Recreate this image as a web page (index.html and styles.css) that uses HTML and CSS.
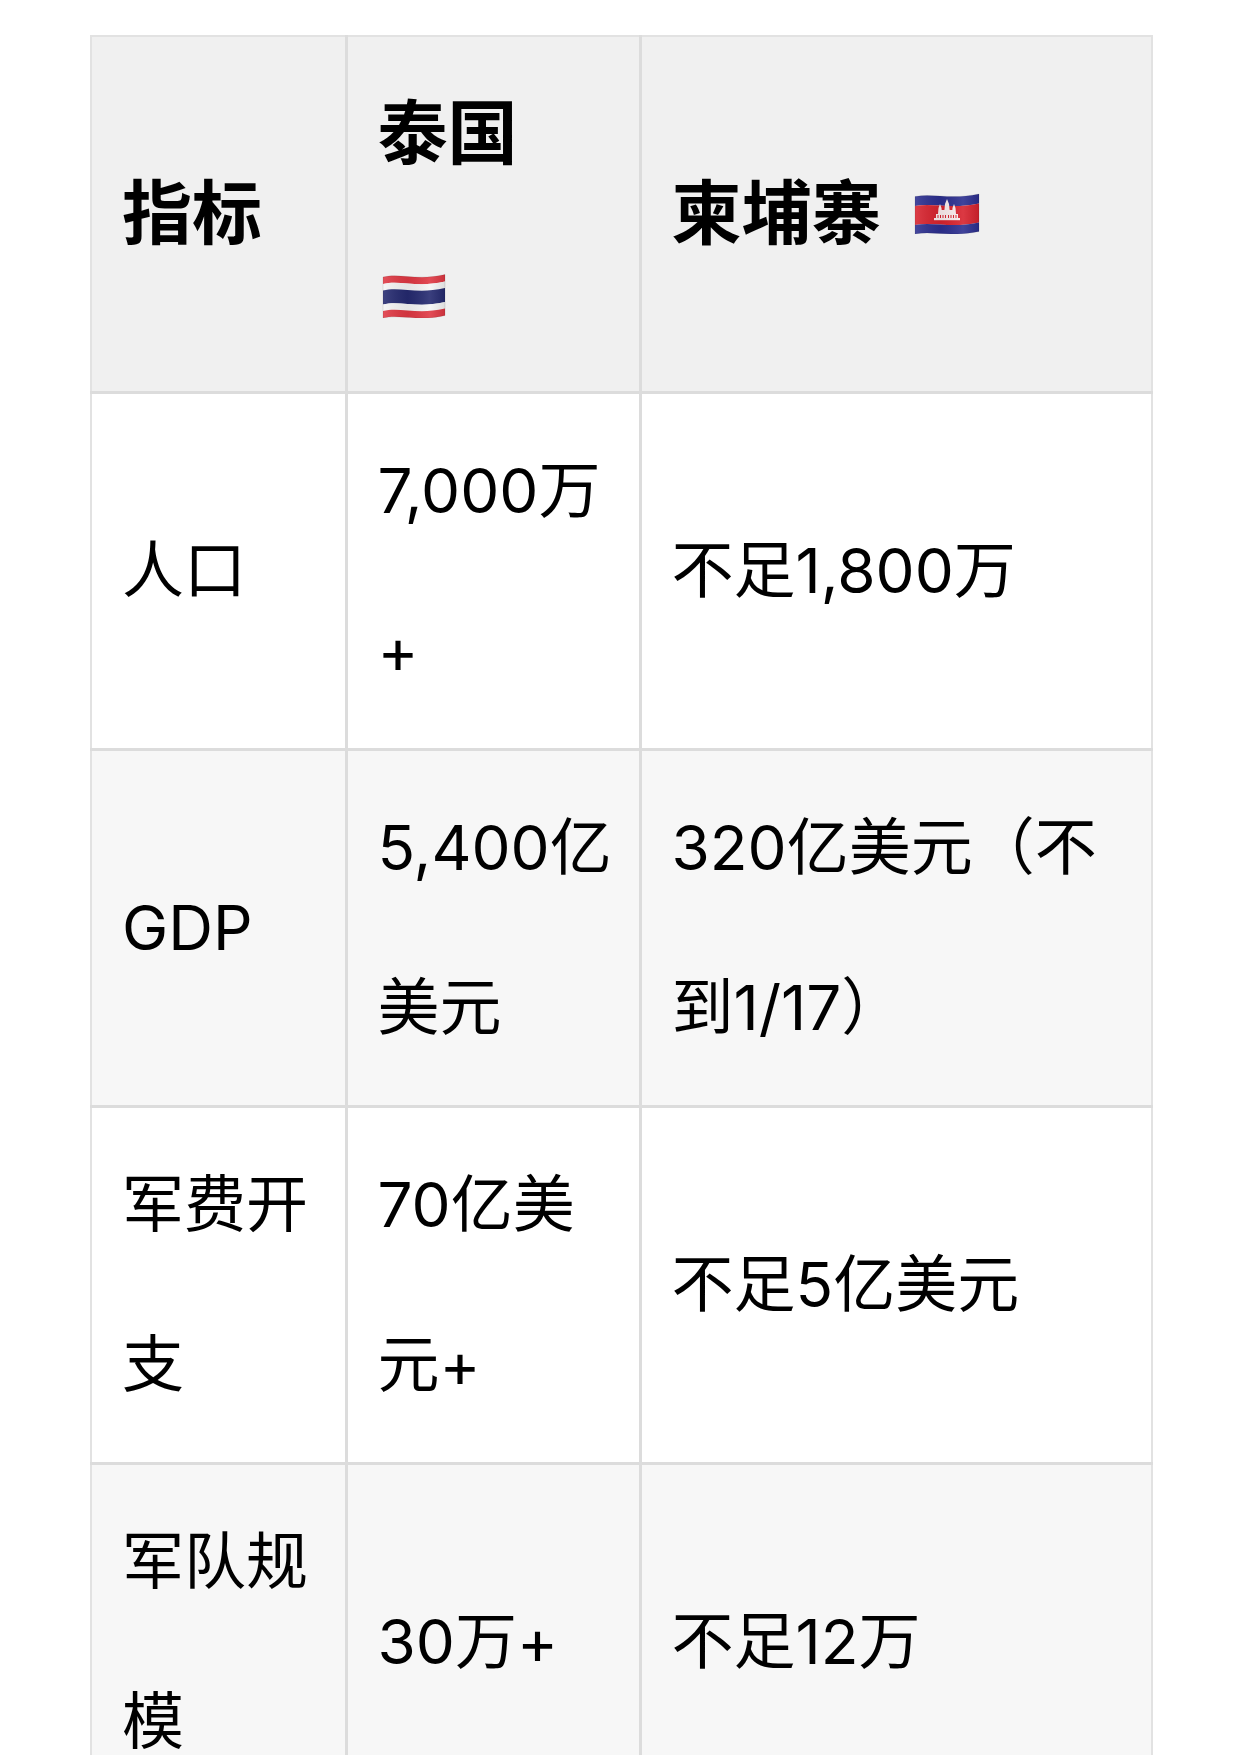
FILE: index.html
```html
<!DOCTYPE html>
<html lang="zh-CN">
<head>
<meta charset="utf-8">
<title>泰国 vs 柬埔寨</title>
<link rel="stylesheet" href="styles.css">
</head>
<body>
<div class="page">
  <table class="cmp">
    <colgroup>
      <col class="c1">
      <col class="c2">
      <col class="c3">
    </colgroup>
    <thead>
      <tr>
        <th>指标</th>
        <th>泰国 <svg class="flag flag-th" viewBox="0 0 64 46" aria-label="泰国国旗">
            <defs>
              <linearGradient id="shadeTh" x1="0" y1="0" x2="1" y2="0">
                <stop offset="0" stop-color="#fff" stop-opacity="0.12"/>
                <stop offset="0.4" stop-color="#000" stop-opacity="0.07"/>
                <stop offset="0.75" stop-color="#fff" stop-opacity="0.10"/>
                <stop offset="1" stop-color="#000" stop-opacity="0.10"/>
              </linearGradient>
            </defs>
            <path fill="#e03843" d="M1 5 C18 1 36 9 63 2.5 L63 9.5 C36 16 18 8 1 12 Z"/>
            <path fill="#f6f6f6" d="M1 12 C18 8 36 16 63 9.5 L63 16 C36 22.5 18 14.5 1 18.5 Z"/>
            <path fill="#252a70" d="M1 18.5 C18 14.5 36 22.5 63 16 L63 30 C36 36.5 18 28.5 1 32.5 Z"/>
            <path fill="#f6f6f6" d="M1 32.5 C18 28.5 36 36.5 63 30 L63 36.5 C36 43 18 35 1 39 Z"/>
            <path fill="#e03843" d="M1 39 C18 35 36 43 63 36.5 L63 43.5 C36 50 18 42 1 46 Z"/>
            <path fill="url(#shadeTh)" d="M1 5 C18 1 36 9 63 2.5 L63 43.5 C36 50 18 42 1 46 Z"/>
            <path fill="none" stroke="#000" stroke-opacity="0.12" stroke-width="0.8" d="M1 5 C18 1 36 9 63 2.5 L63 43.5 C36 50 18 42 1 46 Z"/>
          </svg></th>
        <th>柬埔寨 <svg class="flag flag-kh" viewBox="0 0 66 42" aria-label="柬埔寨国旗">
            <defs>
              <linearGradient id="shadeKh" x1="0" y1="0" x2="1" y2="0">
                <stop offset="0" stop-color="#fff" stop-opacity="0.12"/>
                <stop offset="0.4" stop-color="#000" stop-opacity="0.07"/>
                <stop offset="0.75" stop-color="#fff" stop-opacity="0.10"/>
                <stop offset="1" stop-color="#000" stop-opacity="0.10"/>
              </linearGradient>
            </defs>
            <path fill="#2c2f90" d="M1 4.5 C19 1 37 8 65 2 L65 11.5 C37 17.5 19 10.5 1 14 Z"/>
            <path fill="#d8232e" d="M1 14 C19 10.5 37 17.5 65 11.5 L65 30.5 C37 36.5 19 29.5 1 33 Z"/>
            <path fill="#2c2f90" d="M1 33 C19 29.5 37 36.5 65 30.5 L65 39.5 C37 45.5 19 38.5 1 42 Z"/>
            <g fill="#fbeeee">
              <rect x="20" y="26" width="26" height="2.2"/>
              <rect x="22" y="22" width="22" height="4"/>
              <polygon points="31,12 33,7 35,12 36,22 30,22"/>
              <polygon points="24.5,16 26,12 27.5,16 28,22 24,22"/>
              <polygon points="38.5,16 40,12 41.5,16 42,22 38,22"/>
              <rect x="27" y="18" width="12" height="4"/>
            </g>
            <g fill="#d8232e">
              <rect x="23.5" y="23" width="1" height="3"/>
              <rect x="26" y="23" width="1" height="3"/>
              <rect x="28.5" y="23" width="1" height="3"/>
              <rect x="31" y="23" width="1" height="3"/>
              <rect x="34" y="23" width="1" height="3"/>
              <rect x="36.5" y="23" width="1" height="3"/>
              <rect x="39" y="23" width="1" height="3"/>
              <rect x="41.5" y="23" width="1" height="3"/>
            </g>
            <path fill="url(#shadeKh)" d="M1 4.5 C19 1 37 8 65 2 L65 39.5 C37 45.5 19 38.5 1 42 Z"/>
            <path fill="none" stroke="#000" stroke-opacity="0.12" stroke-width="0.8" d="M1 4.5 C19 1 37 8 65 2 L65 39.5 C37 45.5 19 38.5 1 42 Z"/>
          </svg></th>
      </tr>
    </thead>
    <tbody>
      <tr>
        <td>人口</td>
        <td>7,000万+</td>
        <td>不足1,800万</td>
      </tr>
      <tr>
        <td>GDP</td>
        <td>5,400亿美元</td>
        <td>320亿美元（不到1/17）</td>
      </tr>
      <tr>
        <td>军费开支</td>
        <td>70亿美元+</td>
        <td>不足5亿美元</td>
      </tr>
      <tr>
        <td>军队规模</td>
        <td>30万+</td>
        <td>不足12万</td>
      </tr>
    </tbody>
  </table>
</div>
</body>
</html>
```

FILE: styles.css
```css
html, body {
  margin: 0;
  padding: 0;
  background: #ffffff;
}

body {
  font-family: "Inter", "Noto Sans CJK SC", sans-serif;
  color: #000000;
}

.page {
  padding: 35px 0 0 90px;
}

.cmp {
  border-collapse: collapse;
  table-layout: fixed;
  width: 1061px;
}

.c1 { width: 255px; }
.c2 { width: 294px; }
.c3 { width: 512px; }

.cmp th,
.cmp td {
  border: 3px solid #dcdcdc;
  padding: 17px 20px 17px 30px;
  line-height: 160px;
  vertical-align: middle;
  text-align: left;
  font-size: 62px;
  font-weight: 400;
}

.cmp th {
  font-size: 70px;
  font-weight: 700;
  background: #f0f0f0;
}

.cmp tr > :first-child { border-left: 2px solid #e2e2e2; }
.cmp tr > :last-child { border-right: 2px solid #e2e2e2; }
.cmp thead th { border-top: 2px solid #e2e2e2; }

.cmp tbody tr:nth-child(even) td {
  background: #f7f7f7;
}

.flag {
  display: inline-block;
}

.flag-th {
  width: 64px;
  height: 46px;
  vertical-align: 1px;
  margin: 0 30px 0 4px;
}

.flag-kh {
  width: 66px;
  height: 42px;
  vertical-align: 5px;
  margin: 0 4px 0 16px;
}
```
